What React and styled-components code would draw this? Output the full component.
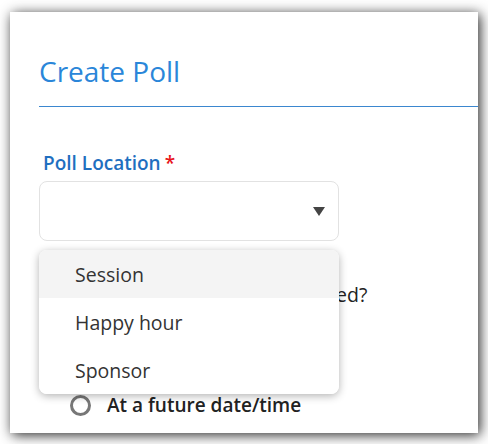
import React from "react";
import styled, { createGlobalStyle } from "styled-components";

const GlobalStyle = createGlobalStyle`
  html, body {
    margin: 0;
    padding: 0;
    background: #fff;
  }
  body {
    font-family: "Open Sans", "Noto Sans", sans-serif;
  }
`;

const Page = styled.div`
  padding: 12px 10px 11px;
`;

const Card = styled.div`
  height: 421px;
  box-sizing: border-box;
  padding-left: 29px;
  background: #fff;
  box-shadow: 2px 2px 12px rgba(0, 0, 0, 0.85);
  overflow: hidden;
`;

const Title = styled.h1`
  margin: 0;
  padding-top: 40px;
  font-size: 28px;
  line-height: 38px;
  font-weight: 400;
  color: #2a86d9;
`;

const Divider = styled.hr`
  margin: 16px 0 0;
  border: 0;
  border-top: 1px solid #3b87cf;
`;

const Form = styled.div`
  padding-top: 44px;
`;

const Label = styled.label`
  display: block;
  margin-left: 4px;
  font-size: 19px;
  line-height: 24px;
  font-weight: 600;
  color: #1f6fc0;
`;

const Required = styled.span`
  margin-left: 4px;
  color: #e8141b;
`;

const Field = styled.div`
  position: relative;
  width: 300px;
  margin-top: 6px;
`;

const SelectBox = styled.div`
  height: 60px;
  box-sizing: border-box;
  display: flex;
  align-items: center;
  justify-content: flex-end;
  padding-right: 13px;
  border: 1px solid #e2e2e2;
  border-radius: 8px;
`;

const Caret = styled.span`
  width: 0;
  height: 0;
  border-left: 6px solid transparent;
  border-right: 6px solid transparent;
  border-top: 9px solid #444;
`;

const Menu = styled.ul`
  position: absolute;
  top: 69px;
  left: 0;
  z-index: 2;
  width: 300px;
  margin: 0;
  padding: 0;
  list-style: none;
  background: #fff;
  border-radius: 8px;
  box-shadow: 0 2px 8px rgba(0, 0, 0, 0.3);
  overflow: hidden;
`;

const Option = styled.li`
  height: 48px;
  display: flex;
  align-items: center;
  padding-left: 36px;
  font-size: 19.5px;
  color: #333;
  background: ${(p) => (p.$active ? "#f4f4f4" : "#fff")};
`;

const Question = styled.p`
  margin: 41px 0 0 4px;
  font-size: 19.5px;
  line-height: 26px;
  color: #222;
`;

const RadioGroup = styled.div`
  display: flex;
  flex-direction: column;
  gap: 26px;
  margin-top: 32px;
  padding-left: 31px;
`;

const RadioRow = styled.label`
  display: flex;
  align-items: center;
  gap: 16px;
  font-size: 19px;
  line-height: 26px;
  font-weight: 600;
  color: #222;
`;

const RadioCircle = styled.span`
  width: 21px;
  height: 21px;
  box-sizing: border-box;
  border: 3px solid #777;
  border-radius: 50%;
`;

const options = ["Session", "Happy hour", "Sponsor"];

export default function App() {
  return (
    <>
      <GlobalStyle />
      <Page>
        <Card>
          <Title>Create Poll</Title>
          <Divider />
          <Form>
            <Label>
              Poll Location<Required>*</Required>
            </Label>
            <Field>
              <SelectBox>
                <Caret />
              </SelectBox>
              <Menu>
                {options.map((o, i) => (
                  <Option key={o} $active={i === 0}>
                    {o}
                  </Option>
                ))}
              </Menu>
            </Field>
            <Question>When should this poll be displayed?</Question>
            <RadioGroup>
              <RadioRow>
                <RadioCircle />
                Immediately
              </RadioRow>
              <RadioRow>
                <RadioCircle />
                At a future date/time
              </RadioRow>
            </RadioGroup>
          </Form>
        </Card>
      </Page>
    </>
  );
}
